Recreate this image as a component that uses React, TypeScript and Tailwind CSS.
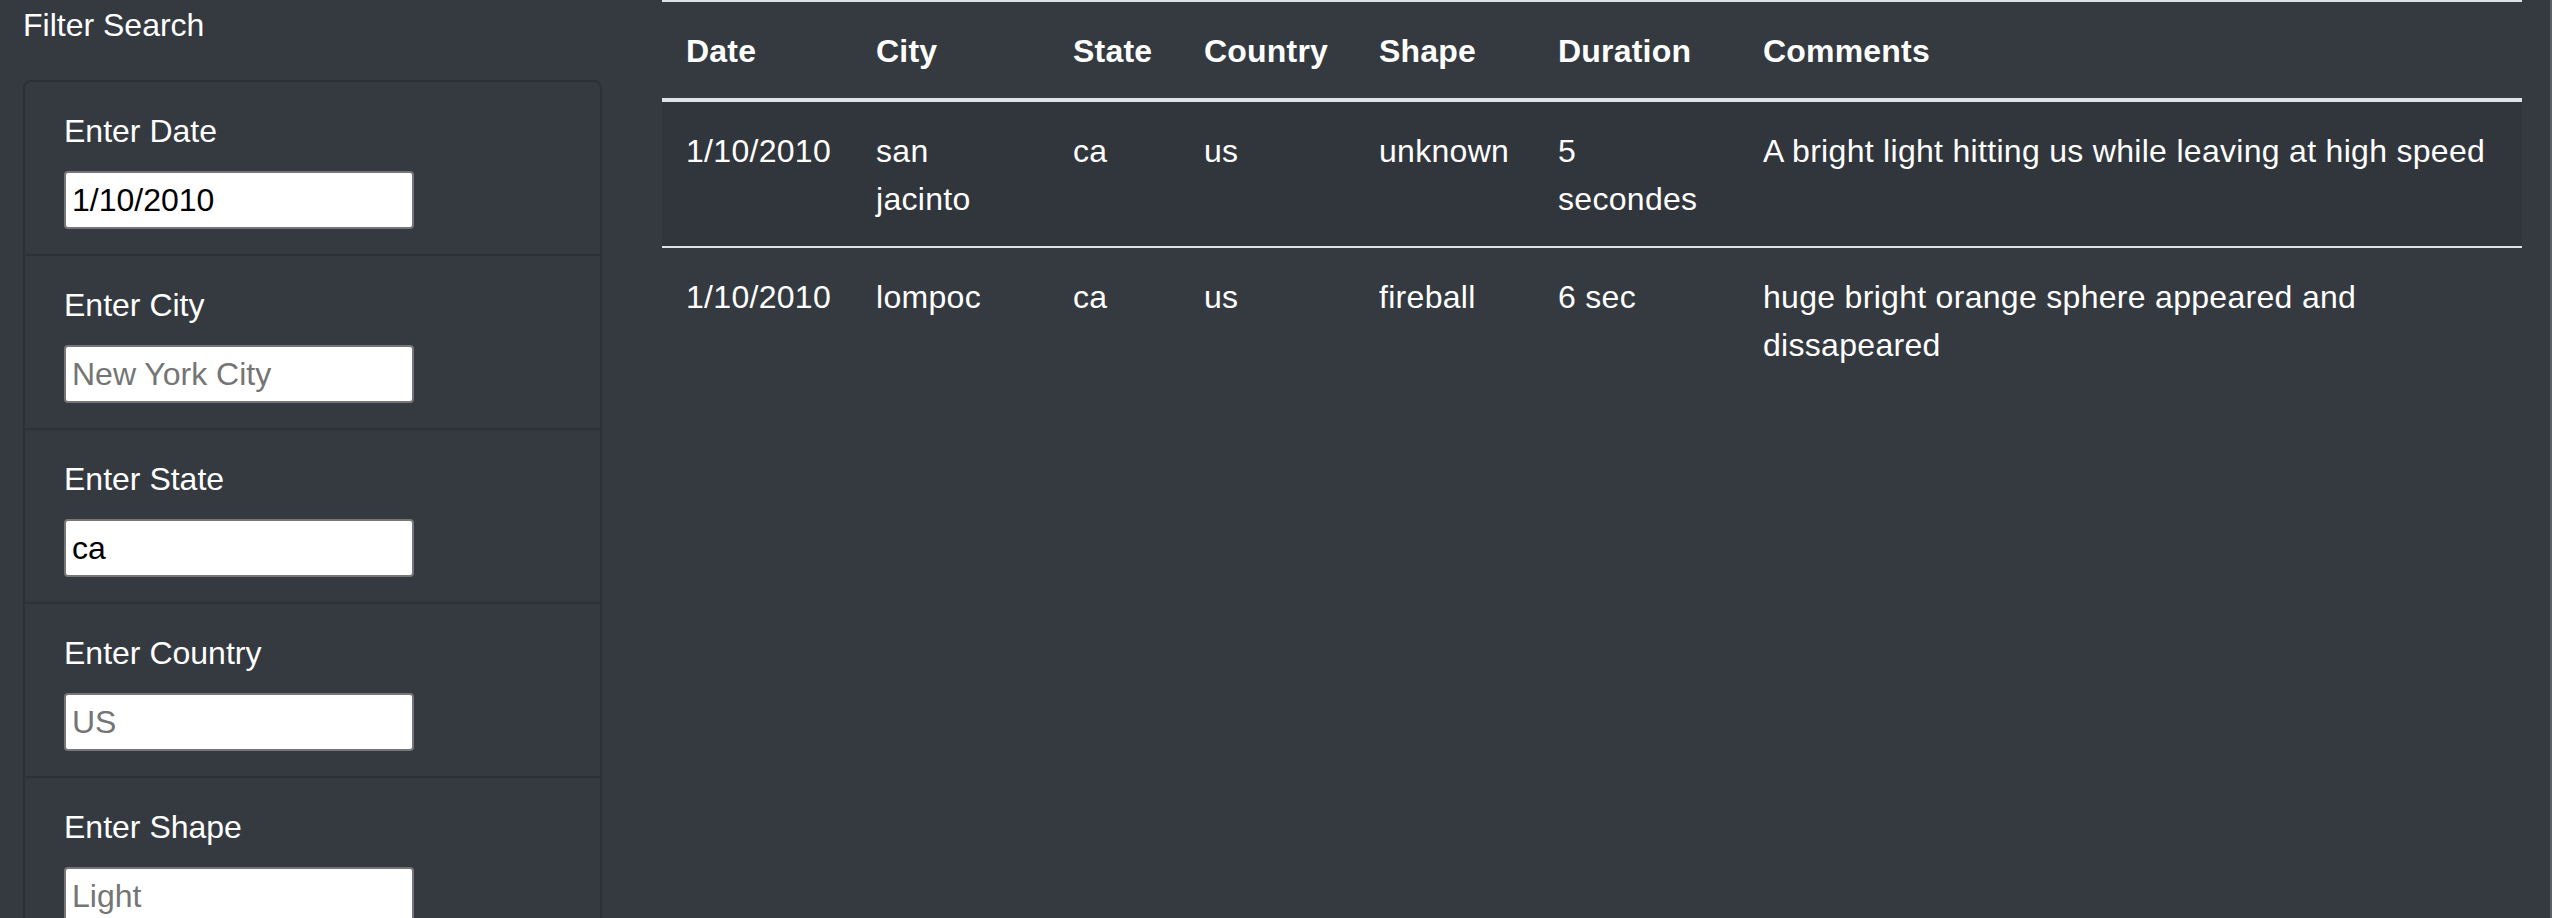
const filters = [
  { label: 'Enter Date', value: '1/10/2010', placeholder: '1/11/2011' },
  { label: 'Enter City', value: '', placeholder: 'New York City' },
  { label: 'Enter State', value: 'ca', placeholder: 'CA' },
  { label: 'Enter Country', value: '', placeholder: 'US' },
  { label: 'Enter Shape', value: '', placeholder: 'Light' },
];

const columns = [
  { name: 'Date', width: 'w-[190px]' },
  { name: 'City', width: 'w-[197px]' },
  { name: 'State', width: 'w-[131px]' },
  { name: 'Country', width: 'w-[175px]' },
  { name: 'Shape', width: 'w-[179px]' },
  { name: 'Duration', width: 'w-[205px]' },
  { name: 'Comments', width: 'w-[783px]' },
];

const sightings = [
  ['1/10/2010', 'san jacinto', 'ca', 'us', 'unknown', '5 secondes', 'A bright light hitting us while leaving at high speed'],
  ['1/10/2010', 'lompoc', 'ca', 'us', 'fireball', '6 sec', 'huge bright orange sphere appeared and dissapeared'],
];

export default function App() {
  return (
    <div className="flex w-[2552px] h-[918px] overflow-hidden bg-[#343a40] border-r-2 border-[#5c6065] text-white font-['Liberation_Sans',Arial,sans-serif]">
      <aside className="pl-[23px] w-[662px] shrink-0">
        <h4 className="text-[32px] leading-[48px] pt-[1px]">Filter Search</h4>
        <div className="mt-[31px] w-[579px] border-2 border-[#2c3136] rounded-[8px]">
          {filters.map((f, i) => (
            <div
              key={f.label}
              className={`pl-[39px] pr-[38px] pt-[25px] pb-[25px] ${i > 0 ? 'border-t-2 border-[#2c3136]' : ''}`}
            >
              <label className="block text-[32px] leading-[48px] mb-[16px]">{f.label}</label>
              <input
                type="text"
                defaultValue={f.value}
                placeholder={f.placeholder}
                className="block w-[350px] h-[58px] bg-white border-2 border-[#767676] rounded-[4px] px-[6px] text-[32px] text-black placeholder:text-[#757575] font-['Liberation_Sans',Arial,sans-serif] outline-none"
              />
            </div>
          ))}
        </div>
      </aside>

      <main className="shrink-0">
        <table className="w-[1860px] table-fixed border-collapse text-[32px] leading-[48px]">
          <thead>
            <tr>
              {columns.map((c) => (
                <th
                  key={c.name}
                  className={`${c.width} text-left font-bold px-[24px] pt-[25px] pb-[23px] align-top border-t-2 border-b-4 border-[#dee2e6] tracking-[0.2px]`}
                >
                  {c.name}
                </th>
              ))}
            </tr>
          </thead>
          <tbody>
            {sightings.map((row, r) => (
              <tr key={r} className={r % 2 === 0 ? 'bg-[#31363c]' : ''}>
                {row.map((cell, c) => (
                  <td
                    key={c}
                    className={`px-[24px] pt-[25px] pb-[23px] align-top tracking-[0.3px] ${r > 0 ? 'border-t-2 border-[#dee2e6]' : ''}`}
                  >
                    {cell}
                  </td>
                ))}
              </tr>
            ))}
          </tbody>
        </table>
      </main>
    </div>
  );
}
